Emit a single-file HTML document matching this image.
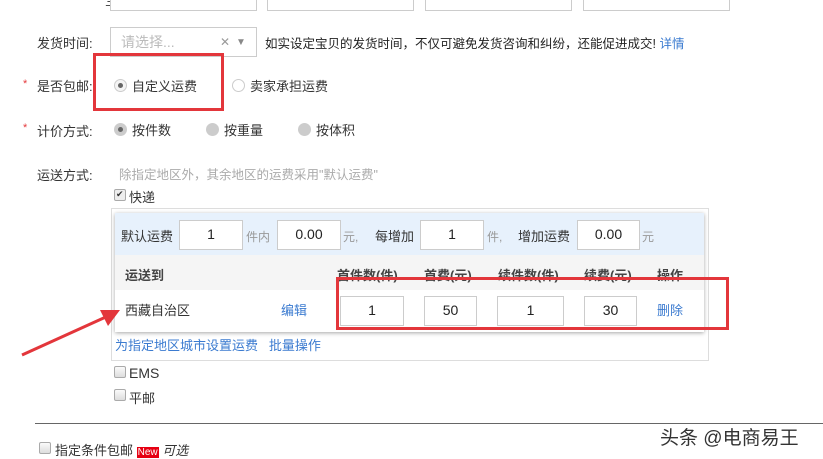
<!DOCTYPE html>
<html><head><meta charset="utf-8"><style>
*{margin:0;padding:0;box-sizing:border-box}
body{width:823px;height:458px;background:#fff;position:relative;overflow:hidden;font-family:"Liberation Sans","Noto Sans CJK SC",sans-serif;font-size:13px;color:#333}
.a{position:absolute;white-space:nowrap}
.in{position:absolute;border:1px solid #ccc;background:#fff;text-align:center;line-height:27px;font-size:14px;color:#222}
.lbl{position:absolute;left:37px;font-size:13px;color:#333}
.star{position:absolute;left:23px;color:#e4393c;font-size:11px}
.rad{position:absolute;width:13px;height:13px;border-radius:50%;border:1px solid #ccc;background:#f4f4f4}
.rad.on::after{content:"";position:absolute;left:3px;top:3px;width:5px;height:5px;border-radius:50%;background:#666}
.rad.g{background:#ccc;border-color:#ccc}
.cb{position:absolute;width:12px;height:12px;border:1px solid #aaa;background:linear-gradient(#fafafa,#ddd);border-radius:2px}
.blue{color:#3b7bd0}
.red{position:absolute;border:3px solid #e3363b}
</style></head><body>
<div class="a" style="left:105px;top:-10px;color:#333">宝贝地址:</div>
<div class="in" style="left:110px;top:-18px;width:147px;height:29px"></div>
<div class="in" style="left:267px;top:-18px;width:147px;height:29px"></div>
<div class="in" style="left:425px;top:-18px;width:147px;height:29px"></div>
<div class="in" style="left:583px;top:-18px;width:147px;height:29px"></div>

<div class="lbl" style="top:33px">发货时间:</div>
<div class="in" style="left:110px;top:27px;width:147px;height:30px;text-align:left;padding-left:10px;color:#bbb;line-height:28px">请选择...<span style="position:absolute;left:109px;color:#999;font-size:12px">✕</span><span style="position:absolute;left:125px;top:1px;color:#888;font-size:10px">▼</span></div>
<div class="a" style="left:265px;top:33px;font-size:12.5px;color:#222">如实设定宝贝的发货时间，不仅可避免发货咨询和纠纷，还能促进成交! <span class="blue">详情</span></div>

<div class="star" style="top:78px">*</div>
<div class="lbl" style="top:76px">是否包邮:</div>
<div class="rad on" style="left:114px;top:79px"></div>
<div class="a" style="left:132px;top:76px">自定义运费</div>
<div class="rad" style="left:232px;top:79px;background:#fff"></div>
<div class="a" style="left:250px;top:76px">卖家承担运费</div>
<div class="red" style="left:93px;top:53px;width:131px;height:58px"></div>

<div class="star" style="top:122px">*</div>
<div class="lbl" style="top:121px">计价方式:</div>
<div class="rad on g" style="left:114px;top:123px"></div>
<div class="a" style="left:132px;top:120px">按件数</div>
<div class="rad g" style="left:206px;top:123px"></div>
<div class="a" style="left:224px;top:120px">按重量</div>
<div class="rad g" style="left:298px;top:123px"></div>
<div class="a" style="left:316px;top:120px">按体积</div>

<div class="lbl" style="top:165px">运送方式:</div>
<div class="a" style="left:119px;top:164px;color:#aaa;font-size:12.5px">除指定地区外，其余地区的运费采用"默认运费"</div>
<div class="cb" style="left:114px;top:189px;background:#eee;overflow:hidden"><span style="position:absolute;left:1px;top:-2px;font-size:9px;line-height:12px;color:#333">✔</span></div>
<div class="a" style="left:129px;top:187px">快递</div>

<div class="a" style="left:111px;top:208px;width:598px;height:153px;border:1px solid #ddd"></div>
<div class="a" style="left:115px;top:213px;width:589px;height:119px;box-shadow:0 1px 4px rgba(0,0,0,.35);background:#fff">
 <div class="a" style="left:0;top:0;width:589px;height:42px;background:#e7f1fc"></div>
 <div class="a" style="left:0;top:42px;width:589px;height:35px;background:#f5f5f5"></div>
</div>
<div class="a" style="left:121px;top:226px">默认运费</div>
<div class="in" style="left:179px;top:220px;width:64px;height:30px">1</div>
<div class="a" style="left:246px;top:228px;color:#999;font-size:12px">件内</div>
<div class="in" style="left:277px;top:220px;width:64px;height:30px">0.00</div>
<div class="a" style="left:343px;top:228px;color:#999;font-size:12px">元,</div>
<div class="a" style="left:375px;top:226px">每增加</div>
<div class="in" style="left:420px;top:220px;width:64px;height:30px">1</div>
<div class="a" style="left:487px;top:228px;color:#999;font-size:12px">件,</div>
<div class="a" style="left:518px;top:226px">增加运费</div>
<div class="in" style="left:577px;top:220px;width:63px;height:30px">0.00</div>
<div class="a" style="left:642px;top:228px;color:#999;font-size:12px">元</div>

<div class="a" style="left:125px;top:265px;font-weight:bold;color:#444">运送到</div>
<div class="a" style="left:337px;top:265px;font-weight:bold;color:#444">首件数(件)</div>
<div class="a" style="left:424px;top:265px;font-weight:bold;color:#444">首费(元)</div>
<div class="a" style="left:498px;top:265px;font-weight:bold;color:#444">续件数(件)</div>
<div class="a" style="left:584px;top:265px;font-weight:bold;color:#444">续费(元)</div>
<div class="a" style="left:657px;top:265px;font-weight:bold;color:#444">操作</div>

<div class="a" style="left:125px;top:300px">西藏自治区</div>
<div class="a blue" style="left:281px;top:300px">编辑</div>
<div class="in" style="left:340px;top:296px;width:64px;height:30px">1</div>
<div class="in" style="left:424px;top:296px;width:53px;height:30px">50</div>
<div class="in" style="left:497px;top:296px;width:67px;height:30px">1</div>
<div class="in" style="left:584px;top:296px;width:53px;height:30px">30</div>
<div class="a blue" style="left:657px;top:300px">删除</div>
<div class="red" style="left:336px;top:277px;width:393px;height:53px"></div>

<div class="a blue" style="left:115px;top:335px">为指定地区城市设置运费&nbsp;&nbsp; 批量操作</div>

<div class="cb" style="left:114px;top:366px"></div>
<div class="a" style="left:129px;top:365px;font-size:14px">EMS</div>
<div class="cb" style="left:114px;top:389px"></div>
<div class="a" style="left:129px;top:388px">平邮</div>

<div class="a" style="left:35px;top:423px;width:788px;height:1px;background:#666"></div>
<div class="cb" style="left:39px;top:442px"></div>
<div class="a" style="left:55px;top:440px">指定条件包邮 <span style="background:#e60012;color:#fff;font-size:10px;padding:0 1px">New</span> <i>可选</i></div>
<div class="a" style="left:660px;top:423px;font-size:19px;color:#333">头条 @电商易王</div>

<svg class="a" style="left:0;top:0" width="823" height="458"><line x1="22" y1="355" x2="108" y2="316" stroke="#e3363b" stroke-width="3"/><polygon points="120,310 100,310 108,326" fill="#e3363b"/></svg>
</body></html>
